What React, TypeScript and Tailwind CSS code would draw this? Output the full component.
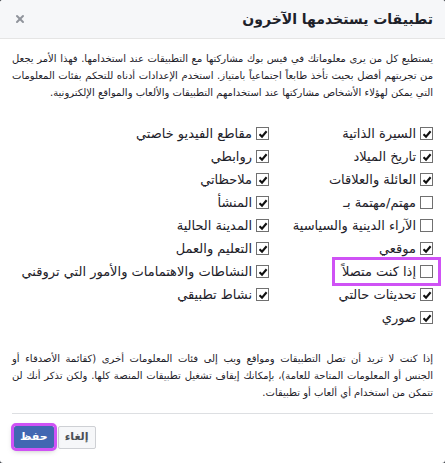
import { X } from 'lucide-react'

const rightItems = [
  { label: 'السيرة الذاتية', checked: true },
  { label: 'تاريخ الميلاد', checked: true },
  { label: 'العائلة والعلاقات', checked: true },
  { label: 'مهتم/مهتمة بـ', checked: false },
  { label: 'الآراء الدينية والسياسية', checked: false },
  { label: 'موقعي', checked: true },
  { label: 'إذا كنت متصلاً', checked: false, marked: true },
  { label: 'تحديثات حالتي', checked: true },
  { label: 'صوري', checked: true },
]

const leftItems = [
  { label: 'مقاطع الفيديو خاصتي', checked: true },
  { label: 'روابطي', checked: true },
  { label: 'ملاحظاتي', checked: true },
  { label: 'المنشأ', checked: true },
  { label: 'المدينة الحالية', checked: true },
  { label: 'التعليم والعمل', checked: true },
  { label: 'النشاطات والاهتمامات والأمور التي تروقني', checked: true },
  { label: 'نشاط تطبيقي', checked: true },
]

const intro = [
  'يستطيع كل من يرى معلوماتك في فيس بوك مشاركتها مع التطبيقات عند استخدامها. فهذا الأمر يجعل',
  'من تجربتهم أفضل بحيث تأخذ طابعاً اجتماعياً بامتياز. استخدم الإعدادات أدناه للتحكم بفئات المعلومات',
  'التي يمكن لهؤلاء الأشخاص مشاركتها عند استخدامهم التطبيقات والألعاب والمواقع الإلكترونية.',
]

const outro = [
  'إذا كنت لا تريد أن تصل التطبيقات ومواقع ويب إلى فئات المعلومات أخرى (كقائمة الأصدقاء أو',
  'الجنس أو المعلومات المتاحة للعامة)، بإمكانك إيقاف تشغيل تطبيقات المنصة كلها. ولكن تذكر أنك لن',
  'تتمكن من استخدام أي ألعاب أو تطبيقات.',
]

function Para({ lines, className }: { lines: string[]; className?: string }) {
  return (
    <div className={'text-[10px] leading-[17px] text-[#1d2129] ' + (className ?? '')}>
      {lines.map((l, i) => (
        <div
          key={i}
          className={'whitespace-nowrap text-justify ' + (i < lines.length - 1 ? '[text-align-last:justify]' : '')}
        >
          {l}
        </div>
      ))}
    </div>
  )
}

function Box({ checked }: { checked: boolean }) {
  return (
    <span className="w-[13px] h-[13px] shrink-0 border border-[#707070] bg-white flex items-center justify-center">
      {checked && (
        <svg className="w-[10px] h-[10px]" viewBox="0 0 10 10" fill="none">
          <path d="M1.5 5.2 L4 7.6 L8.6 2.2" stroke="#111" strokeWidth={2.1} />
        </svg>
      )}
    </span>
  )
}

function Item({ label, checked, marked }: { label: string; checked: boolean; marked?: boolean }) {
  return (
    <div className="h-[23px] flex items-center">
      <label
        className={
          'flex items-center gap-[4px] ' +
          (marked ? 'outline-[3px] outline-solid outline-[#cf52f5] outline-offset-[5px] pl-[2px]' : '')
        }
      >
        <Box checked={checked} />
        <span className="text-[13px] text-[#1d2129] whitespace-nowrap leading-none">{label}</span>
      </label>
    </div>
  )
}

export default function App() {
  return (
    <div className="w-[445px] h-[463px] bg-[#3b3f46]" dir="rtl" style={{ fontFamily: '"DejaVu Sans", sans-serif' }}>
      <div className="w-full h-full bg-white rounded-[3px] overflow-hidden flex flex-col">
        <div className="h-[39px] shrink-0 bg-[#f6f7f9] border-b border-[#e5e5e5] flex items-center justify-between pr-3 pl-[14px]">
          <h1 className="text-[14px] font-bold text-[#1d2129]">تطبيقات يستخدمها الآخرون</h1>
          <X className="w-[12px] h-[12px] text-[#90949c]" strokeWidth={4} />
        </div>

        <div className="px-3 pt-[11px] flex-1 flex flex-col">
          <Para lines={intro} />

          <div className="mt-[21px] flex">
            <div className="w-[164px] shrink-0 flex flex-col">
              {rightItems.map((it) => (
                <Item key={it.label} {...it} />
              ))}
            </div>
            <div className="flex-1 flex flex-col">
              {leftItems.map((it) => (
                <Item key={it.label} {...it} />
              ))}
            </div>
          </div>

          <Para lines={outro} className="mt-[21px]" />

          <div className="mt-[12px] border-t border-[#dddfe2]" />

          <div className="flex justify-end gap-[4px] pt-[12px] pl-[2px]">
            <button className="h-[23px] px-[6px] bg-[#f6f7f9] border border-[#ced0d4] rounded-[2px] text-[11px] font-bold text-[#4b4f56]">
              إلغاء
            </button>
            <button className="h-[22px] px-[5px] bg-[#4267b2] border border-[#4267b2] rounded-[2px] text-[11px] font-bold text-white outline-[3px] outline-solid outline-[#cf52f5] shadow-[0_2px_6px_rgba(0,0,0,0.35)]">
              حفظ
            </button>
          </div>
        </div>
      </div>
    </div>
  )
}
